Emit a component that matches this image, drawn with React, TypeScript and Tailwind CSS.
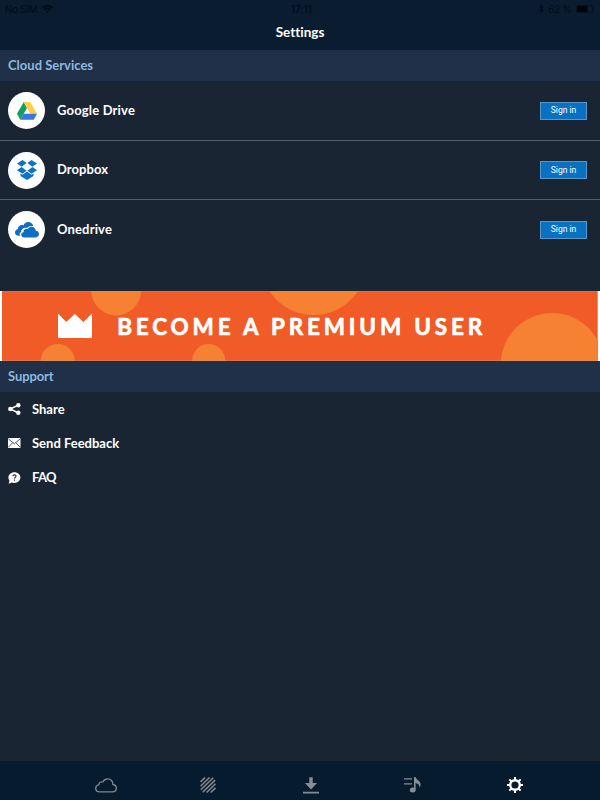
import React from "react";

function StatusBar() {
  return (
    <div className="flex h-[17px] items-center justify-between pl-[5px] pr-[5px] font-['Inter',sans-serif] text-[10px] font-medium leading-none text-[#020c17]">
      <div className="flex w-[60px] items-center gap-[3px]">
        <span className="whitespace-nowrap font-normal tracking-[-0.4px]">No SIM</span>
        <svg width="11" height="8" viewBox="0 0 11 8" fill="none" stroke="#010912" className="ml-[2px]">
          <path d="M.6 2.8C3.3.2 7.700.2 10.400 2.800" strokeWidth="1.700" />
          <path d="M2.400 4.700c1.800-1.700 4.400-1.700 6.200 0" strokeWidth="1.500" />
          <path d="M5.500 8 3.900 6.200c.9-.8 2.300-.8 3.200 0z" fill="#010912" stroke="none" />
        </svg>
      </div>
      <span className="pl-[3px] font-medium">17:11</span>
      <div className="flex w-[60px] items-center justify-end gap-[4px]">
        <svg width="5" height="9" viewBox="0 0 5 9" fill="none" stroke="#010912" strokeWidth="1">
          <path d="m.4 2.300 4 4-2 2V.7l2 2-4 4" />
        </svg>
        <span className="whitespace-nowrap font-normal tracking-[-0.3px]">62 %</span>
        <svg width="19" height="8" viewBox="0 0 19 8">
          <rect x=".5" y=".5" width="16" height="7" rx="1.500" fill="none" stroke="#061321" />
          <rect x="1" y="1" width="10.500" height="6" rx=".5" fill="#00050b" />
          <path d="M17.500 2.500c1 .3 1 2.700 0 3z" fill="#061321" />
        </svg>
      </div>
    </div>
  );
}

function DriveIcon() {
  return (
    <svg width="20" height="18" viewBox="0 0 20 18">
      <path d="M6.700 0 0 11.800 3.300 17.700 10 5.900z" fill="#11a05e" />
      <path d="M6.700 0h6.600L20 11.800h-6.600z" fill="#ffcf48" />
      <path d="M6.700 11.800H20l-3.300 5.900H3.300z" fill="#3777e3" />
    </svg>
  );
}

function DropboxIcon() {
  return (
    <svg width="20" height="20" viewBox="0 0 20 20" fill="#0d72c4">
      <path d="M5.500 0 9.600 3 4.600 6.700 0 3.600z" />
      <path d="M14.500 0 20 3.600 15.400 6.700 10.400 3z" />
      <path d="M4.600 7 9.600 10.700 5.500 13.700 0 10.200z" />
      <path d="M15.400 7 20 10.200 14.500 13.700 10.400 10.700z" />
      <path d="m10 11.400 4.500 3.300 2-1.200v2.600L10 20l-6.500-3.900v-2.600l2 1.200z" />
    </svg>
  );
}

function OnedriveIcon() {
  return (
    <svg width="24" height="16" viewBox="0 0 24 16" fill="#0d6fbd">
      <path d="M5.300 13.700H3.400C1.400 13.700 0 12.200 0 10.400c0-1.800 1.200-3 2.700-3.200.1-2.400 2-4.100 4.200-4.100.6 0 1.100.1 1.500.3C9.200 1.300 11.100 0 13.300 0c2.500 0 4.500 1.700 5 4-3-.4-5 .2-6.200 2-3.400-.7-5.900 1.200-6 4-1.500.7-1.900 2.300-.8 3.700z" />
      <path d="M9.200 15.400c-1.700 0-3-1.200-3-2.600 0-1.400 1-2.400 2.300-2.600-.2-2 1.300-3.400 3-3.400.5 0 .9.1 1.300.3.7-1.500 2.100-2.400 3.800-2.400 2.300 0 4.100 1.800 4.200 4.100 1.900.1 3.200 1.500 3.200 3.300 0 1.800-1.300 3.300-3.200 3.300z" />
    </svg>
  );
}

function SectionHeader({ children }: { children: React.ReactNode }) {
  return (
    <div className="flex h-[31px] shrink-0 items-center bg-[#213049] pl-2 text-[13px] text-[#8ab9df]">
      {children}
    </div>
  );
}

function ServiceRow({ icon, label, className }: { icon: React.ReactNode; label: React.ReactNode; className: string }) {
  return (
    <div className={`flex items-center border-[#52616f] pl-2 pr-[13px] ${className}`}>
      <div className="flex size-[37px] items-center justify-center rounded-full bg-white">{icon}</div>
      <div className="ml-3 flex-1 text-[13px] text-white">{label}</div>
      <button className="flex h-[18px] w-[47px] items-center justify-center border border-[#5796c8] bg-[#0971c2] font-['Roboto',sans-serif] text-[8.500px] font-normal leading-none text-white">
        Sign in
      </button>
    </div>
  );
}

function Banner() {
  return (
    <div className="flex h-[70px] shrink-0 bg-white px-[2.300px]">
      <svg width="595.4" height="70" viewBox="2.3 291 595.4 70">
        <rect x="2" y="291" width="596" height="70" fill="#f15b27" />
        <g fill="#f68132">
          <circle cx="116.5" cy="290.4" r="25" />
          <circle cx="314" cy="262" r="53" />
          <circle cx="58" cy="361" r="17" />
          <circle cx="209" cy="360.5" r="16.5" />
          <circle cx="552.5" cy="364.5" r="51.5" />
        </g>
        <path d="M58.300 313.600 66.600 322 75.200 314l8.500 8 8.600-8.400V338h-34z" fill="#fff" />
        <text x="117.5" y="335" textLength="365" fill="#fff" fontSize="22.5" fontWeight="700" fontFamily="Lato, sans-serif" stroke="#fff" strokeWidth=".7" strokeLinejoin="round">
          BECOME A PREMIUM USER
        </text>
        <path d="M2 291.200h596M2 360.800h596" stroke="#c49a87" strokeWidth=".5" />
      </svg>
    </div>
  );
}

function ShareIcon() {
  return (
    <svg width="13" height="12" viewBox="0 0 13 12" fill="#fff">
      <path d="M10.400 2 2.300 6l8.100 4" fill="none" stroke="#fff" strokeWidth="1.400" />
      <circle cx="2.300" cy="6" r="2.200" />
      <circle cx="10.300" cy="2.200" r="2.200" />
      <circle cx="10.300" cy="9.800" r="2.200" />
    </svg>
  );
}

function MailIcon() {
  return (
    <svg width="13" height="10" viewBox="0 0 13 10">
      <rect x="0" y="0" width="12.500" height="10" rx=".8" fill="#fff" />
      <path d="m.5 1 5.800 4.800L12 1M.6 9l4-4.200M11.900 9 8 4.800" fill="none" stroke="#233142" strokeWidth=".8" />
    </svg>
  );
}

function FaqIcon() {
  return (
    <svg width="13" height="12" viewBox="0 0 13 12">
      <path d="M6.400.3c3.400 0 6 2.300 6 5.300s-2.600 5.300-6 5.300c-1 0-1.900-.2-2.700-.5-.9.7-2 1-3.200 1 .7-.8 1-1.700.9-2.800C.7 7.700.4 6.700.4 5.600.4 2.600 3 .3 6.400.3z" fill="#fff" />
      <path d="M4.900 4.300c.1-1.900 3.200-1.800 3.100 0 0 1.100-1.500 1.200-1.500 2.500M6.500 7.600v1.100" fill="none" stroke="#233142" strokeWidth="1.100" />
    </svg>
  );
}

function SupportRow({ icon, label }: { icon: React.ReactNode; label: React.ReactNode }) {
  return (
    <div className="flex h-[34.300px] items-center pl-2 text-[13px] text-white">
      <div className="flex w-6 items-center">{icon}</div>
      <div className="pt-px">{label}</div>
    </div>
  );
}

function TabBar() {
  return (
    <nav className="flex h-[39px] shrink-0 items-center bg-[#071b2f] pl-[95px] pt-[9px]">
      <svg className="mr-[83px]" width="22" height="15" viewBox="0 0 22 15" fill="none" stroke="#7f8890" strokeWidth="1.300">
        <path d="M4.700 13.900h12.500c2.400 0 4.100-1.500 4.100-3.700 0-2-1.400-3.500-3.400-3.700C18 3.200 15.800.9 12.800.9c-2.200 0-4 1.100-4.900 3.100-2.100-.7-4 .7-4 2.700C2 7.200.7 8.500.7 10.300c0 2.100 1.700 3.600 4 3.600z" />
      </svg>
      <svg className="mr-[87px]" width="16" height="16" viewBox="0 0 16 16" fill="none" stroke="#858d95" strokeWidth="1.500">
        <path d="M.5 4.900 5.200.5M.5 9.200 9.500.5M.9 12.700 13.300.8M2.700 15.200 15.100 3.100M6.600 15.500 15.500 6.800M10.700 15.500l4.800-4.600" />
      </svg>
      <svg className="mr-[85px]" width="16" height="17" viewBox="0 0 16 17" fill="#858d95">
        <path d="M6.300.3h3.400V6H14l-6 6.500L2 6h4.300zM0 14.800h16v1.700H0z" />
      </svg>
      <svg className="mr-[85.500px]" width="17" height="16" viewBox="0 0 17 16" fill="#858d95">
        <path d="M0 1.300h8v1.200H0zM0 6.200h8v1.200H0z" />
        <ellipse cx="8.700" cy="13" rx="2.900" ry="2.500" />
        <path d="M10 0h1.600c.2 2.500 5 3.800 5 7.300 0 1.400-.5 2.500-1.200 3.400.5-2.700-1.500-4-3.800-4.700v7H10z" />
      </svg>
      <svg width="16" height="16" viewBox="0 0 16 16" fill="none" stroke="#fff">
        <circle cx="8" cy="8" r="4.800" strokeWidth="2.400" />
        <path d="M8 0v3M8 13v3M0 8h3M13 8h3M2.350 2.350l2.100 2.100M11.550 11.550l2.100 2.100M2.350 13.650l2.100-2.100M11.550 4.450l2.100-2.100" strokeWidth="2" />
      </svg>
    </nav>
  );
}

export default function App() {
  return (
    <div className="flex h-[800px] w-[600px] flex-col overflow-hidden bg-[#1a2534] font-['Lato','Open_Sans',sans-serif] font-bold [font-variant-ligatures:none]">
      <header className="h-[50px] shrink-0 bg-[#091c30]">
        <StatusBar />
        <h1 className="flex h-[31px] items-center justify-center text-[13.500px] text-white">
          <span>Settings</span>
        </h1>
      </header>
      <SectionHeader><span>Cloud Services</span></SectionHeader>
      <div className="h-[210px] shrink-0">
        <ServiceRow className="h-[60px] border-b" icon={<DriveIcon />} label={<span className="tracking-[0.17px]">Google Drive</span>} />
        <ServiceRow className="h-[59px] border-b" icon={<DropboxIcon />} label={<span className="tracking-[0.05px]">Dropbox</span>} />
        <ServiceRow className="h-[59px]" icon={<OnedriveIcon />} label={<span className="tracking-[0.150px]">Onedrive</span>} />
      </div>
      <Banner />
      <SectionHeader><span className="tracking-[-0.1px]">Support</span></SectionHeader>
      <div className="flex-1">
        <SupportRow icon={<ShareIcon />} label={<span>Share</span>} />
        <SupportRow icon={<MailIcon />} label={<span>Send Feedback</span>} />
        <SupportRow icon={<FaqIcon />} label={<span className="tracking-[-0.700px]">FAQ</span>} />
      </div>
      <TabBar />
    </div>
  );
}
